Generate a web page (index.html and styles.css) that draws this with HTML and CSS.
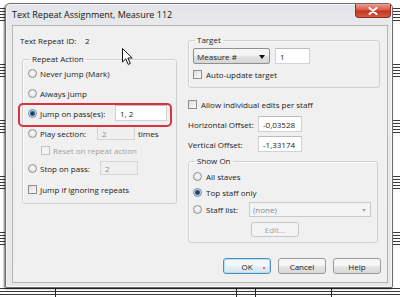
FILE: index.html
```html
<!DOCTYPE html>
<html lang="en">
<head>
  <meta charset="UTF-8" />
  <title>Text Repeat Assignment</title>
  <link rel="stylesheet" href="styles.css">
</head>
<body>

  <div class="dialog">
    <div class="titlebar">
      <span class="title">Text Repeat Assignment, Measure 112</span>
      <span class="close">
        <svg width="10" height="8" viewBox="0 0 10 8"><path d="M1.5 1 L8.5 7 M8.5 1 L1.5 7" stroke="#fff" stroke-width="2" stroke-linecap="round"/></svg>
      </span>
    </div>

    <div class="client">
      <!-- left column -->
      <div class="col-left">
        <div class="row id-row"><span class="lbl-id">Text Repeat ID:</span>2</div>

        <fieldset class="group action">
          <legend>Repeat Action</legend>
          <div class="row"><span class="radio"></span>Never jump (Mark)</div>
          <div class="row gap4"><span class="radio"></span>Always jump</div>
          <div class="row gap4 marked">
            <span class="radio on"></span><span class="lbl-jump">Jump on pass(es):</span>
            <span class="field w-jump">1, 2</span>
            <span class="highlight"></span>
          </div>
          <div class="row gap4"><span class="radio"></span><span class="lbl-play">Play section:</span><span class="field off w-pass">2</span><span class="times">times</span></div>
          <div class="row gap1 sub off-text"><span class="check off"></span>Reset on repeat action</div>
          <div class="row gap2"><span class="radio"></span><span class="lbl-stop">Stop on pass:</span><span class="field off w-pass">2</span></div>
          <div class="row gap5"><span class="check"></span>Jump if ignoring repeats</div>
        </fieldset>
      </div>

      <!-- right column -->
      <div class="col-right">
        <fieldset class="group target">
          <legend>Target</legend>
          <div class="row gap2">
            <span class="combo">Measure #<span class="arrow"></span></span>
            <span class="field w-target">1</span>
          </div>
          <div class="row gap2"><span class="check"></span>Auto-update target</div>
        </fieldset>

        <div class="row allow"><span class="check"></span>Allow individual edits per staff</div>
        <div class="row gap4"><span class="lbl-off">Horizontal Offset:</span><span class="field w-off">-0,03528</span></div>
        <div class="row gap4"><span class="lbl-off">Vertical Offset:</span><span class="field w-off">-1,33174</span></div>

        <fieldset class="group show">
          <legend>Show On</legend>
          <div class="row gap1"><span class="radio"></span>All staves</div>
          <div class="row"><span class="radio on"></span>Top staff only</div>
          <div class="row gap1">
            <span class="radio"></span><span class="lbl-staff">Staff list:</span>
            <span class="combo off">(none)<span class="arrow"></span></span>
          </div>
          <div class="edit-row"><span class="btn off">Edit...</span></div>
        </fieldset>
      </div>

      <div class="buttons">
        <span class="btn default">OK<span class="mark"></span></span>
        <span class="btn">Cancel</span>
        <span class="btn">Help</span>
      </div>
    </div>
  </div>

  <!-- mouse pointer -->
  <svg class="cursor" width="12" height="18" viewBox="0 0 12 18">
    <path d="M0.5 0.5 L0.5 14 L3.8 10.8 L6.2 16.4 L8.3 15.5 L5.9 10 L10.2 10 Z" fill="#fff" stroke="#111" stroke-width="1"/>
  </svg>

</body>
</html>
```

FILE: styles.css
```css
body {
  margin: 0;
  width: 400px;
  height: 297px;
  overflow: hidden;
  position: relative;
  font-family: "Open Sans", "Liberation Sans", sans-serif;
  font-size: 8px;
  color: #1b1b1b;
  background-color: #fff;
  background-image:
    linear-gradient(#222, #222),
    linear-gradient(#222, #222),
    linear-gradient(#222, #222),
    linear-gradient(#222, #222),
    linear-gradient(180deg, #3a3a3a 0 1px, transparent 1px 3px, #3a3a3a 3px 4px, transparent 4px 6px, #3a3a3a 6px 7px, transparent 7px 9px, #3a3a3a 9px 10px, transparent 10px 12px, #3a3a3a 12px 13px, transparent 13px);
  background-size: 1px 9px, 1px 9px, 1px 9px, 1px 9px, 100% 56px;
  background-position: 55px 288px, 236px 288px, 255px 288px, 331px 288px, 0 8px;
  background-repeat: no-repeat, no-repeat, no-repeat, no-repeat, repeat;
}

/* window frame */
.dialog {
  margin: 3px 0 0 5px;
  width: 388px;
  height: 285px;
  box-sizing: border-box;
  padding: 0 4px 4px 6px;
  border: 1px solid #6e6e6e;
  border-radius: 5px 5px 2px 2px;
  background: linear-gradient(#e2e4e8, #eaebed 30px, #e8e8e8);
  box-shadow: -1px 1px 2px rgba(0, 0, 0, 0.55), inset 0 0 0 1px #f7f7f7;
  display: flex;
  flex-direction: column;
}
.titlebar {
  height: 21px;
  display: flex;
  align-items: center;
  margin-right: -3px;
}
.title {
  font-size: 9px;
  color: #151515;
}
.close {
  margin-left: auto;
  align-self: flex-start;
  width: 36px;
  height: 14px;
  box-sizing: border-box;
  border: 1px solid #8d2b22;
  border-top: none;
  border-radius: 0 0 4px 4px;
  background: linear-gradient(#eba093, #d85a47 45%, #c5361f 55%, #d45a3e);
  display: flex;
  align-items: center;
  justify-content: center;
}

/* client area */
.client {
  flex: 1;
  box-sizing: border-box;
  border: 1px solid #b5b5b5;
  background: #f0f0f0;
  padding: 0 7px 0 7px;
  display: grid;
  grid-template-columns: 158px 192px;
  column-gap: 10px;
  align-items: start;
  align-content: start;
}

.row {
  height: 16px;
  display: flex;
  align-items: center;
  white-space: nowrap;
}
.gap1 { margin-top: 1px; }
.gap2 { margin-top: 2px; }
.gap4 { margin-top: 4px; }
.gap5 { margin-top: 5px; }

.group {
  margin: 0;
  padding: 0 5px 5px 4px;
  border: 1px solid #d0d0d0;
  border-radius: 3px;
  box-shadow: inset 1px 1px 0 #fbfbfb;
  min-width: 0;
}
.group legend {
  padding: 0 2px;
  margin-left: 2px;
  line-height: 12px;
}

/* left column */
.id-row {
  margin-top: 6px;
}
.lbl-id {
  width: 65px;
}
.action {
  margin: 5px 1px 0 2px;
  padding: 0 5px 6px 5px;
}
.lbl-jump { width: 75px; }
.lbl-play { width: 57px; }
.lbl-stop { width: 60px; }
.times { margin-left: 3px; }
.sub { padding-left: 13px; }
.off-text { color: #a2a2a2; }

.marked {
  position: relative;
}
.highlight {
  position: absolute;
  left: -10px;
  top: -2px;
  width: 150px;
  height: 20px;
  border: 2px solid #d8343f;
  border-radius: 5px;
}

/* controls */
.radio {
  width: 9px;
  height: 9px;
  box-sizing: border-box;
  border: 1px solid #929292;
  border-radius: 50%;
  background: radial-gradient(circle at 50% 40%, #fbfbfb, #d9d9d9);
  margin-right: 3px;
  flex: none;
}
.radio.on {
  background: radial-gradient(circle, #1f3f5c 0 1.6px, #5b8fb4 2.4px, #d6e6f1 3.2px, #eef4f8);
  border-color: #6c8aa2;
}
.check {
  width: 9px;
  height: 9px;
  box-sizing: border-box;
  border: 1px solid #8e8e8e;
  background: linear-gradient(135deg, #dcdcdc, #fdfdfd);
  margin-right: 3px;
  flex: none;
}
.check.off {
  border-color: #c2c2c2;
  background: #f4f4f4;
}
.field {
  height: 16px;
  box-sizing: border-box;
  display: inline-flex;
  align-items: center;
  border: 1px solid #cfd3d8;
  border-top-color: #b9bdc2;
  background: #fff;
  padding: 0 4px;
}
.field.off {
  background: #efefef;
  border-color: #d4d4d4;
  color: #8e8e8e;
  height: 14px;
}
.w-jump { width: 52px; }
.w-pass { width: 38px; }
.w-target { width: 35px; margin-left: 5px; }
.w-off { width: 44px; }

.combo {
  position: relative;
  width: 77px;
  height: 16px;
  box-sizing: border-box;
  display: inline-flex;
  align-items: center;
  padding-left: 3px;
  border: 1px solid #8f8f8f;
  border-radius: 2px;
  background: linear-gradient(#f4f4f4 0 45%, #e2e2e2 55%, #d6d6d6);
}
.combo .arrow {
  position: absolute;
  right: 4px;
  top: 6px;
  border-left: 3px solid transparent;
  border-right: 3px solid transparent;
  border-top: 4px solid #111;
}
.combo.off {
  width: 122px;
  height: 15px;
  border-color: #cacaca;
  border-radius: 0;
  background: #f4f4f4;
  color: #8a8a8a;
}
.combo.off .arrow {
  top: 6px;
  border-top-color: #a8a8a8;
  border-left-width: 2.5px;
  border-right-width: 2.5px;
  border-top-width: 3px;
}

/* right column */
.target {
  margin-top: 8px;
}
.allow {
  margin-top: 8px;
  margin-left: 0;
}
.allow .check {
  margin-right: 4px;
}
.target .check,
.show .radio {
  margin-right: 4px;
}
.lbl-off { width: 70px; }
.show {
  margin-top: 3px;
  margin-right: 2px;
}
.lbl-staff { width: 43px; }
.edit-row {
  margin-top: 5px;
  padding-left: 58px;
}

/* buttons */
.btn {
  height: 16px;
  box-sizing: border-box;
  display: inline-flex;
  align-items: center;
  justify-content: center;
  border: 1px solid #9b9b9b;
  border-radius: 3px;
  background: linear-gradient(#f7f7f7 0 45%, #e4e4e4 55%, #d9d9d9);
  position: relative;
}
.btn.off {
  width: 48px;
  height: 15px;
  border-color: #c6c6c6;
  background: #f4f4f4;
  color: #a6a6a6;
}
.buttons {
  grid-column: 1 / -1;
  justify-self: end;
  margin-top: 15px;
  margin-right: -1px;
  display: flex;
  gap: 7px;
}
.buttons .btn {
  width: 48px;
}
.btn.default {
  border-color: #4b8fc0;
  box-shadow: inset 0 0 0 1px #b6e0f6;
  background: linear-gradient(#f3f8fb 0 45%, #e3eef5 55%, #d6e4ee);
}
.mark {
  position: absolute;
  right: 5px;
  top: 8px;
  width: 2px;
  height: 2px;
  background: #e0707d;
}

.cursor {
  position: absolute;
  left: 122px;
  top: 48px;
}
```
